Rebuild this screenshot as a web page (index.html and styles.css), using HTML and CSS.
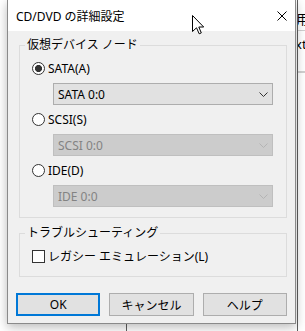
FILE: index.html
```html
<!DOCTYPE html>
<html lang="ja">
<head>
  <meta charset="UTF-8">
  <title>CD/DVD の詳細設定</title>
  <link rel="stylesheet" href="styles.css">
</head>
<body>
  <!-- Ventana de fondo -->
  <div class="desk">
    <div class="desk-gap"></div>
    <div class="desk-rule"></div>
    <div class="desk-mid"></div>
    <div class="desk-rule"></div>
    <div class="desk-side">
      <div class="side-cell side-top">用</div>
      <div class="side-cell side-next">xt</div>
      <div class="side-cell"></div>
    </div>
  </div>

  <!-- Diálogo -->
  <div class="dialog">
    <div class="titlebar">
      <span class="title">CD/DVD の詳細設定</span>
      <svg class="close" width="10" height="10" viewBox="0 0 10 10">
        <path d="M0.5 0.5 L9.5 9.5 M9.5 0.5 L0.5 9.5" stroke="#000" stroke-width="1" fill="none"/>
      </svg>
    </div>

    <div class="content">
      <fieldset class="group">
        <legend>仮想デバイス ノード</legend>
        <div class="group-body">
          <div class="choice">
            <span class="radio checked"></span>
            <span>SATA(A)</span>
          </div>
          <div class="combo">
            <span>SATA 0:0</span>
            <svg class="chevron" width="9" height="5" viewBox="0 0 9 5">
              <path d="M0.5 0.5 L4.5 4.5 L8.5 0.5" fill="none" stroke="#333"/>
            </svg>
          </div>

          <div class="choice">
            <span class="radio"></span>
            <span>SCSI(S)</span>
          </div>
          <div class="combo disabled">
            <span>SCSI 0:0</span>
            <svg class="chevron" width="9" height="5" viewBox="0 0 9 5">
              <path d="M0.5 0.5 L4.5 4.5 L8.5 0.5" fill="none" stroke="#b4b4b4"/>
            </svg>
          </div>

          <div class="choice">
            <span class="radio"></span>
            <span>IDE(D)</span>
          </div>
          <div class="combo disabled">
            <span>IDE 0:0</span>
            <svg class="chevron" width="9" height="5" viewBox="0 0 9 5">
              <path d="M0.5 0.5 L4.5 4.5 L8.5 0.5" fill="none" stroke="#b4b4b4"/>
            </svg>
          </div>
        </div>
      </fieldset>

      <fieldset class="group group-trouble">
        <legend>トラブルシューティング</legend>
        <div class="group-body">
          <div class="choice">
            <span class="check"></span>
            <span>レガシー エミュレーション(L)</span>
          </div>
        </div>
      </fieldset>

      <div class="buttons">
        <button class="btn default">OK</button>
        <button class="btn">キャンセル</button>
        <button class="btn">ヘルプ</button>
      </div>
    </div>
  </div>

  <!-- Puntero del ratón -->
  <svg class="pointer" width="13" height="20" viewBox="0 0 13 20">
    <path d="M0.5 0.5 V16.5 L4.5 12.8 L7.2 18.8 L9.3 17.9 L6.8 12 H11.7 Z" fill="#fff" stroke="#000" stroke-width="1" stroke-linejoin="miter"/>
  </svg>
</body>
</html>
```

FILE: styles.css
```css
/* Base */
html, body {
  margin: 0;
  padding: 0;
  height: 100%;
}
body {
  position: relative;
  background: #fff;
  font-family: "Noto Sans", "Noto Sans CJK JP", sans-serif;
  font-size: 12px;
  color: #000;
  overflow: hidden;
}

/* Ventana de fondo */
.desk {
  display: flex;
  height: 100%;
}
.desk-gap { width: 126px; }
.desk-mid { width: 170px; }
.desk-rule {
  width: 1px;
  background: #5f5f5f;
}
.desk-side {
  flex: 1;
  overflow: hidden;
  background: #fff;
}
.side-cell {
  white-space: nowrap;
  border-bottom: 1px solid #d0d0d0;
}
.side-top {
  height: 30px;
  line-height: 38px;
  font-size: 13px;
  text-indent: -2px;
}
.side-next {
  height: 40px;
  line-height: 26px;
  font-size: 13px;
  text-indent: -3px;
}

/* Diálogo */
.dialog {
  position: absolute;
  left: 7px;
  top: 0;
  width: 289px;
  box-sizing: border-box;
  border: 1px solid #8a8a8a;
  border-top: none;
  background: #f0f0f0;
  box-shadow: 0 3px 10px rgba(0, 0, 0, 0.28);
}
.titlebar {
  height: 31px;
  background: #fff;
  display: flex;
  align-items: center;
  justify-content: space-between;
  padding-left: 8px;
}
.close {
  margin-right: 8px;
}
.content {
  padding: 6px 8px 7px 11px;
}

/* Grupos */
.group {
  margin: 0;
  padding: 0;
  border: 1px solid #dcdcdc;
}
.group legend {
  margin-left: 5px;
  padding: 0 2px;
  line-height: 16px;
}
.group-body {
  padding: 7px 12px 10px 12px;
}
.group-trouble {
  margin-top: 7px;
}
.group-trouble .group-body {
  padding-bottom: 12px;
}

/* Opciones */
.choice {
  display: flex;
  align-items: center;
  gap: 3px;
  height: 16px;
}
.combo + .choice {
  margin-top: 6px;
}
.radio,
.check {
  width: 13px;
  height: 13px;
  box-sizing: border-box;
  border: 1px solid #333;
  background: #fff;
  flex: none;
}
.radio {
  border-radius: 50%;
}
.radio.checked {
  background: radial-gradient(circle, #333 3.3px, #fff 3.8px);
}

/* Combos */
.combo {
  margin: 7px 0 0 21px;
  width: 220px;
  height: 22px;
  box-sizing: border-box;
  border: 1px solid #adadad;
  background: #e1e1e1;
  display: flex;
  align-items: center;
  justify-content: space-between;
  padding-left: 4px;
}
.combo .chevron {
  margin-right: 4px;
}
.combo.disabled {
  background: #cccccc;
  border-color: #bfbfbf;
  color: #838383;
}

/* Botones */
.buttons {
  display: flex;
  gap: 9px;
  margin: 16px 0 0 -3px;
}
.btn {
  width: 85px;
  height: 23px;
  padding: 0;
  box-sizing: border-box;
  border: 1px solid #adadad;
  background: #e1e1e1;
  font: inherit;
  color: #000;
}
.btn.default {
  border: 2px solid #0078d7;
}

/* Puntero */
.pointer {
  position: absolute;
  left: 192px;
  top: 15px;
}
```
